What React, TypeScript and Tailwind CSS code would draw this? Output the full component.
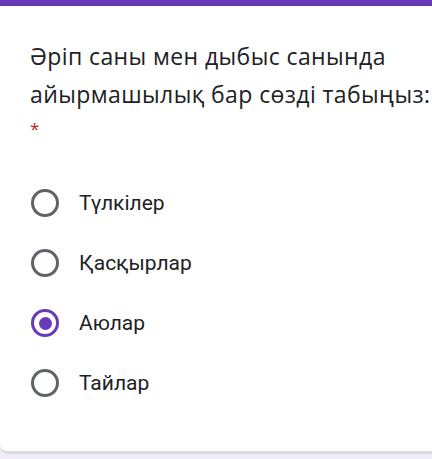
const options = ['Түлкілер', 'Қасқырлар', 'Аюлар', 'Тайлар'];

function Radio({ checked }: { checked: boolean }) {
  if (checked) {
    return (
      <span className="flex h-[28px] w-[28px] items-center justify-center rounded-full border-[3px] border-[#673ab7]">
        <span className="h-[13px] w-[13px] rounded-full bg-[#673ab7]" />
      </span>
    );
  }
  return <span className="h-[28px] w-[28px] rounded-full border-[3px] border-[#5f6368]" />;
}

export default function App() {
  return (
    <div className="h-[459px] w-[432px] overflow-hidden bg-[#f0ebf8]">
      <div className="bg-white border-b-[3px] border-[#dadce0] rounded-bl-[8px]">
        <div className="h-[6px] bg-[#673ab7]" />
        <div className="pl-[30px] pr-[2px] pt-[31px] pb-[54px]">
          <h2
            className="whitespace-nowrap text-[23px] leading-[38px] text-[#202124] tracking-[0.4px]"
            style={{ fontFamily: '"Open Sans", sans-serif' }}
          >
            Әріп саны мен дыбыс санында
            <br />
            айырмашылық бар сөзді табыңыз:
          </h2>
          <div
            className="mt-[6px] text-[17px] leading-[20px] text-[#c5221f]"
            style={{ fontFamily: '"Open Sans", sans-serif' }}
          >
            *
          </div>
          <ul className="mt-[50px] flex flex-col gap-[32px]">
            {options.map((o, i) => (
              <li key={o} className="flex items-center gap-[20px] pl-[1px]">
                <Radio checked={i === 2} />
                <span className="text-[21px] leading-[28px] text-[#202124]" style={{ fontFamily: 'Roboto, sans-serif' }}>
                  {o}
                </span>
              </li>
            ))}
          </ul>
        </div>
      </div>
    </div>
  );
}
